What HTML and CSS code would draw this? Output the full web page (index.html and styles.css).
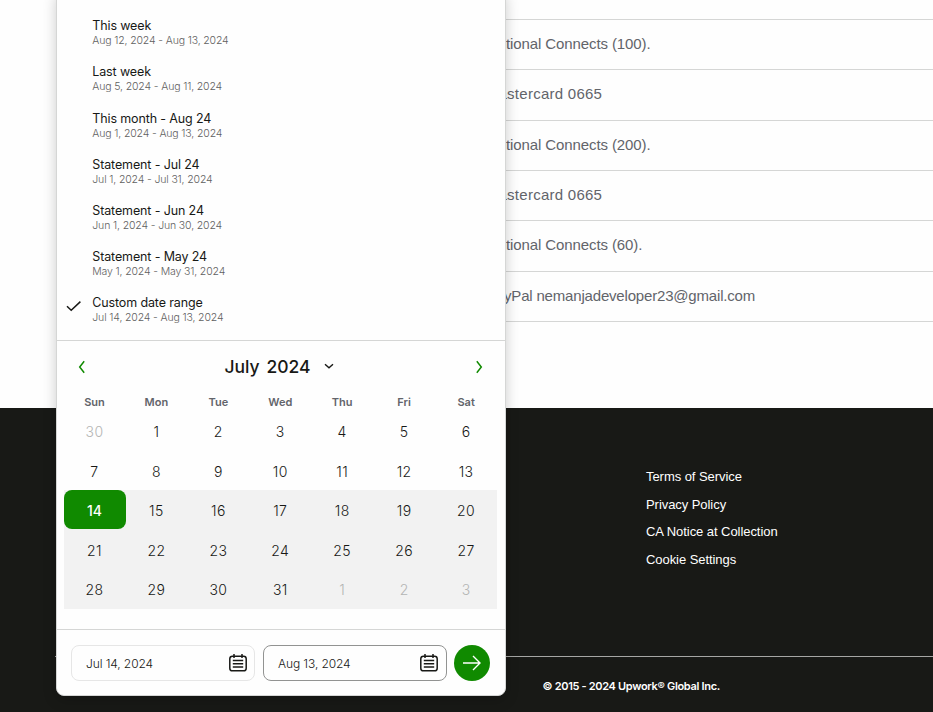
FILE: index.html
```html
<!DOCTYPE html>
<html lang="en">
<head>
<meta charset="utf-8">
<title>Transaction history</title>
<link rel="stylesheet" href="styles.css">
</head>
<body>
<div class="page">
  <main class="transactions">
    <div class="row row-lead"></div>
    <div class="row">tional Connects (100).</div>
    <div class="row row-card">astercard 0665</div>
    <div class="row">tional Connects (200).</div>
    <div class="row row-card">astercard 0665</div>
    <div class="row">tional Connects (60).</div>
    <div class="row row-paypal">yPal nemanjadeveloper23@gmail.com</div>
  </main>
  <footer class="footer">
    <nav class="links">
      <a>Terms of Service</a>
      <a>Privacy Policy</a>
      <a>CA Notice at Collection</a>
      <a>Cookie Settings</a>
    </nav>
    <div class="legal">© 2015 - 2024 Upwork® Global Inc.</div>
  </footer>

  <section class="popover">
    <ul class="presets">
      <li><b>This week</b><small>Aug 12, 2024 - Aug 13, 2024</small></li>
      <li><b>Last week</b><small>Aug 5, 2024 - Aug 11, 2024</small></li>
      <li><b>This month - Aug 24</b><small>Aug 1, 2024 - Aug 13, 2024</small></li>
      <li><b>Statement - Jul 24</b><small>Jul 1, 2024 - Jul 31, 2024</small></li>
      <li><b>Statement - Jun 24</b><small>Jun 1, 2024 - Jun 30, 2024</small></li>
      <li><b>Statement - May 24</b><small>May 1, 2024 - May 31, 2024</small></li>
      <li><svg class="check" width="16" height="12" viewBox="0 0 16 12"><path d="M1 6.2 5.2 10.2 14.4 1.6"/></svg><b>Custom date range</b><small>Jul 14, 2024 - Aug 13, 2024</small></li>
    </ul>
    <div class="calendar">
      <header class="month">
        <svg class="arrow" width="8" height="14" viewBox="0 0 8 14"><path d="M6.2 1.3 1.7 7l4.5 5.7"/></svg>
        <div class="title">July<span>2024</span><svg width="10" height="6" viewBox="0 0 10 6"><path d="M1 1.2 5 4.7 9 1.2"/></svg></div>
        <svg class="arrow" width="8" height="14" viewBox="0 0 8 14"><path d="M1.8 1.3 6.3 7l-4.5 5.7"/></svg>
      </header>
      <div class="grid weekdays"><span>Sun</span><span>Mon</span><span>Tue</span><span>Wed</span><span>Thu</span><span>Fri</span><span>Sat</span></div>
      <div class="grid week"><span class="out">30</span><span>1</span><span>2</span><span>3</span><span>4</span><span>5</span><span>6</span></div>
      <div class="grid week"><span>7</span><span>8</span><span>9</span><span>10</span><span>11</span><span>12</span><span>13</span></div>
      <div class="range">
        <div class="grid week"><span class="selected">14</span><span>15</span><span>16</span><span>17</span><span>18</span><span>19</span><span>20</span></div>
        <div class="grid week"><span>21</span><span>22</span><span>23</span><span>24</span><span>25</span><span>26</span><span>27</span></div>
        <div class="grid week"><span>28</span><span>29</span><span>30</span><span>31</span><span class="out">1</span><span class="out">2</span><span class="out">3</span></div>
      </div>
    </div>
    <div class="actions">
      <div class="field">Jul 14, 2024<svg width="18" height="18" viewBox="0 0 18 18"><rect x=".8" y="2.2" width="16.4" height="14.6" rx="2.6"/><path d="M5 0v4M13 0v4M3.8 6.5h10.4M3.8 9.7h10.4M3.8 12.9h10.4"/></svg></div>
      <div class="field active">Aug 13, 2024<svg width="18" height="18" viewBox="0 0 18 18"><rect x=".8" y="2.2" width="16.4" height="14.6" rx="2.6"/><path d="M5 0v4M13 0v4M3.8 6.5h10.4M3.8 9.7h10.4M3.8 12.9h10.4"/></svg></div>
      <button class="go"><svg width="18" height="16" viewBox="0 0 18 16"><path d="M0 8h16.6M10 1l7 7-7 7"/></svg></button>
    </div>
  </section>
</div>
</body>
</html>
```
FILE: styles.css
```css
* { box-sizing: border-box; }
body { margin: 0; background: #fefefe; font-family: "Liberation Sans", Arial, sans-serif; }
svg { fill: none; stroke: currentColor; flex: none; }

.page { position: relative; width: 933px; height: 712px; overflow: hidden; }

.transactions { height: 408px; padding-left: 60px; }
.row {
  height: 50.33px;
  padding: 0 0 0 446px;
  border-bottom: 1px solid #d5d6d5;
  color: #62646a;
  font-size: 15px;
  line-height: 48.8px;
  letter-spacing: -.1px;
  white-space: nowrap;
}
.row-lead { height: 20px; }
.row-card { padding-left: 438.5px; letter-spacing: .26px; }
.row-paypal { padding-left: 444px; letter-spacing: -.18px; line-height: 48.5px; }

.footer { height: 304px; background: #181916; color: #fff; }
.links { height: 248px; padding: 55px 0 0 646px; display: flex; flex-direction: column; }
.links a { height: 27.7px; line-height: 28px; font-size: 13px; letter-spacing: -.06px; }
.legal {
  margin-left: 55px;
  padding-left: 487.5px;
  border-top: 1px solid #a5a6a4;
  line-height: 59px;
  font-size: 11px;
  font-family: Inter, sans-serif;
  font-weight: 600;
  letter-spacing: -.32px;
}

.popover {
  position: absolute;
  left: 56px;
  top: -10px;
  width: 450px;
  height: 706px;
  display: flex;
  flex-direction: column;
  background: #fefefe;
  border: 1px solid #d5d6d5;
  border-radius: 8px;
  box-shadow: 0 4px 14px rgba(0, 0, 0, .2);
  font-family: Inter, sans-serif;
  color: #181916;
}
.presets { list-style: none; margin: 0; padding: 26.3px 0 0 35.3px; height: 349px; }
.presets li { position: relative; height: 46.17px; white-space: nowrap; }
.presets b { display: block; font-size: 12.5px; line-height: 17px; font-weight: 400; letter-spacing: -.13px; }
.presets small { display: block; font-size: 10.5px; line-height: 14.5px; font-weight: 300; letter-spacing: -.14px; color: #5e6060; }
.check { position: absolute; left: -26px; top: 6px; stroke-width: 1.5; }

.calendar { height: 289px; padding: 0 7px; border-top: 1px solid #d5d6d5; }
.month { height: 51px; padding: 0 15px 0 14px; display: flex; align-items: center; justify-content: space-between; }
.arrow { color: #108a00; stroke-width: 1.5; }
.title { display: flex; align-items: center; font-size: 17.5px; font-weight: 450; letter-spacing: -.05px; margin-right: 2px; }
.title span { margin: 0 14px 0 7px; }
.title svg { stroke-width: 1.4; margin-top: -2px; }
.grid { display: grid; grid-template-columns: repeat(7, 61.95px); width: 433px; text-align: center; }
.grid span { padding-right: 1px; }
.weekdays { height: 20px; line-height: 20px; font-size: 11px; font-weight: 600; color: #62646a; }
.week { height: 39.5px; line-height: 40px; font-size: 14px; font-weight: 300; letter-spacing: .4px; color: #181916; }
.week .out { color: #b4b5b4; }
.range { width: 433px; background: #f2f2f2; height: 119px; margin-top: -1px; }
.range .week { line-height: 42px; }
.week .selected { height: 39px; background: #108a00; color: #fff; font-weight: 500; letter-spacing: 0; border-radius: 8px; }

.actions { flex: 1; display: flex; align-items: flex-start; gap: 8px; padding: 15px 0 0 14px; border-top: 1px solid #d5d6d5; }
.field {
  width: 184px;
  height: 36px;
  padding: 0 7px 0 14px;
  display: flex;
  align-items: center;
  justify-content: space-between;
  border: 1px solid #e6e6e6;
  border-radius: 8px;
  font-size: 12px;
  font-weight: 300;
  letter-spacing: -.1px;
}
.active { padding-right: 8px; border-color: #929392; }
.field svg { stroke-width: 1.5; }
.go { width: 36px; height: 36px; margin-left: -1px; padding: 0; border: 0; border-radius: 50%; display: grid; place-items: center; background: #108a00; color: #fff; }
.go svg { stroke-width: 1.4; }
```
